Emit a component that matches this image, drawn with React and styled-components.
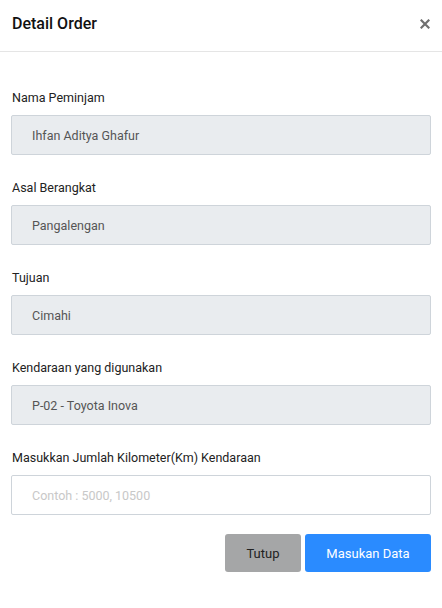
import React, { useState } from 'react';
import styled, { createGlobalStyle } from 'styled-components';

const GlobalStyle = createGlobalStyle`
    body {
        margin: 0;
        background: #fff;
        font-family: Roboto, "Liberation Sans", sans-serif;
        color: #212529;
    }
`;

const Modal = styled.section`
    width: 442px;
    background: #fff;
`;

const Header = styled.header`
    height: 52px;
    box-sizing: border-box;
    display: flex;
    align-items: center;
    justify-content: space-between;
    padding: 0 12px 5px 12px;
    border-bottom: 1px solid #e5e5e5;

    h1 {
        margin: 0;
        font-size: 16px;
        font-weight: 500;
        color: #111;
    }
`;

const CloseButton = styled.button`
    border: none;
    background: none;
    padding: 0;
    width: 10px;
    height: 10px;
    display: flex;
    cursor: pointer;
    margin-top: 1px;
`;

const Body = styled.div`
    padding: 37px 11px 0;
`;

const Field = styled.div`
    margin-bottom: 24px;

    label {
        display: block;
        font-size: 12.5px;
        line-height: 18px;
        color: #222;
        margin: 0 0 8px 1px;
    }
`;

const Input = styled.input`
    display: block;
    box-sizing: border-box;
    width: 100%;
    height: 40px;
    padding: 0 20px;
    font-family: inherit;
    font-size: 12.5px;
    color: #555;
    background: ${(p) => (p.disabled ? '#e9ecef' : '#fff')};
    border: 1px solid #ced4da;
    border-radius: 2px;
    outline: none;

    &::placeholder {
        color: #c8c8c8;
    }
`;

const Footer = styled.div`
    display: flex;
    justify-content: flex-end;
    gap: 4px;
    margin-top: -5px;
`;

const Button = styled.button`
    width: ${(p) => p.width}px;
    height: 38px;
    padding: 0;
    border: none;
    border-radius: 3px;
    font-family: inherit;
    font-size: 13px;
    background: ${(p) => (p.primary ? '#2a8bff' : '#a5a6a7')};
    color: ${(p) => (p.primary ? '#fff' : '#222')};
    cursor: pointer;
`;

const fields = [
    { label: 'Nama Peminjam', value: 'Ihfan Aditya Ghafur' },
    { label: 'Asal Berangkat', value: 'Pangalengan' },
    { label: 'Tujuan', value: 'Cimahi' },
    { label: 'Kendaraan yang digunakan', value: 'P-02 - Toyota Inova' },
];

const App = () => {
    const [km, setKm] = useState('');

    return (
        <>
            <GlobalStyle />
            <Modal>
                <Header>
                    <h1>Detail Order</h1>
                    <CloseButton aria-label="close">
                        <svg width="10" height="10" viewBox="0 0 10 10">
                            <path d="M1.5 1.5 L8.5 8.5 M8.5 1.5 L1.5 8.5" stroke="#707070" strokeWidth="2.2" strokeLinecap="square" />
                        </svg>
                    </CloseButton>
                </Header>
                <Body>
                    {fields.map((f) => (
                        <Field key={f.label}>
                            <label>{f.label}</label>
                            <Input type="text" value={f.value} disabled readOnly />
                        </Field>
                    ))}
                    <Field>
                        <label>Masukkan Jumlah Kilometer(Km) Kendaraan</label>
                        <Input type="text" placeholder="Contoh : 5000, 10500"
                            value={km}
                            onChange={(e) => setKm(e.target.value)} />
                    </Field>
                    <Footer>
                        <Button width={76}>Tutup</Button>
                        <Button width={126} primary>Masukan Data</Button>
                    </Footer>
                </Body>
            </Modal>
        </>
    );
};

export default App;
